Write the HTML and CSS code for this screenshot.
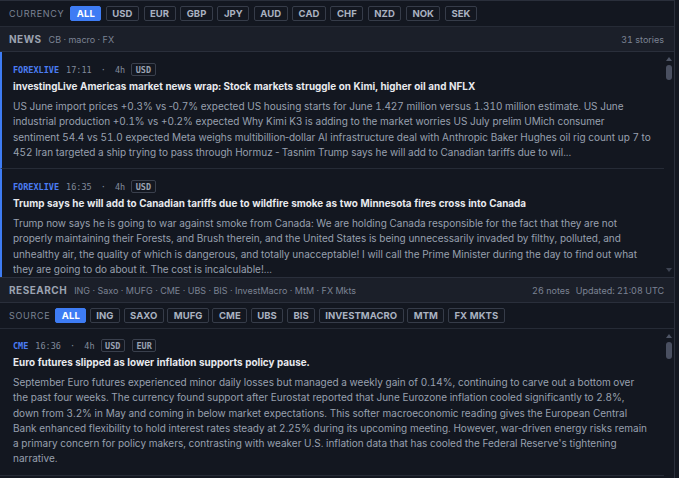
FILE: index.html
```html
<!DOCTYPE html>
<html lang="en">
<head>
<meta charset="utf-8">
<title>Macro Feed</title>
<link rel="stylesheet" href="styles.css">
</head>
<body>
<div class="app">
  <div class="filterbar">
    <span class="flabel">CURRENCY</span>
    <span class="chip active">ALL</span>
    <span class="chip">USD</span>
    <span class="chip">EUR</span>
    <span class="chip">GBP</span>
    <span class="chip">JPY</span>
    <span class="chip">AUD</span>
    <span class="chip">CAD</span>
    <span class="chip">CHF</span>
    <span class="chip">NZD</span>
    <span class="chip">NOK</span>
    <span class="chip">SEK</span>
  </div>

  <div class="sechead">
    <div class="sectitle"><span class="secname">NEWS</span><span class="secsub">CB · macro · FX</span></div>
    <span class="secinfo">31 stories</span>
  </div>

  <div class="listwrap news-wrap">
    <div class="list">
      <article class="item unread">
        <div class="meta"><span class="src">FOREXLIVE</span><span class="time">17:11 · 4h</span><span class="tag">USD</span></div>
        <h3 class="title">investingLive Americas market news wrap: Stock markets struggle on Kimi, higher oil and NFLX</h3>
        <p class="body clamp4">US June import prices +0.3% vs ‐0.7% expected US housing starts for June 1.427 million versus 1.310 million estimate. US June industrial production +0.1% vs +0.2% expected Why Kimi K3 is adding to the market worries US July prelim UMich consumer sentiment 54.4 vs 51.0 expected Meta weighs multibillion‐dollar AI infrastructure deal with Anthropic Baker Hughes oil rig count up 7 to 452 Iran targeted a ship trying to pass through Hormuz ‐ Tasnim Trump says he will add to Canadian tariffs due to wil...</p>
      </article>
      <article class="item unread">
        <div class="meta"><span class="src">FOREXLIVE</span><span class="time">16:35 · 4h</span><span class="tag">USD</span></div>
        <h3 class="title">Trump says he will add to Canadian tariffs due to wildfire smoke as two Minnesota fires cross into Canada</h3>
        <p class="body clamp4">Trump now says he is going to war against smoke from Canada: We are holding Canada responsible for the fact that they are not properly maintaining their Forests, and Brush therein, and the United States is being unnecessarily invaded by filthy, polluted, and unhealthy air, the quality of which is dangerous, and totally unacceptable! I will call the Prime Minister during the day to find out what they are going to do about it. The cost is incalculable!...</p>
      </article>
      <article class="item">
        <div class="meta"><span class="src">FOREXLIVE</span><span class="time">16:02 · 5h</span><span class="tag">USD</span></div>
        <h3 class="title">Baker Hughes oil rig count up 7 to 452</h3>
        <p class="body clamp4">Baker Hughes weekly rig count data shows oil rigs rising by seven to 452 while gas rigs were little changed.</p>
      </article>
    </div>
    <div class="scrollbar">
      <span class="arrow up"></span>
      <span class="thumb news-thumb"></span>
      <span class="spacer"></span>
      <span class="arrow down"></span>
    </div>
  </div>

  <div class="sechead">
    <div class="sectitle"><span class="secname">RESEARCH</span><span class="secsub">ING · Saxo · MUFG · CME · UBS · BIS · InvestMacro · MtM · FX Mkts</span></div>
    <span class="secinfo">26 notes<span class="updated">Updated: 21:08 UTC</span></span>
  </div>

  <div class="filterbar source">
    <span class="flabel">SOURCE</span>
    <span class="chip active">ALL</span>
    <span class="chip">ING</span>
    <span class="chip">SAXO</span>
    <span class="chip">MUFG</span>
    <span class="chip">CME</span>
    <span class="chip">UBS</span>
    <span class="chip">BIS</span>
    <span class="chip">INVESTMACRO</span>
    <span class="chip">MTM</span>
    <span class="chip">FX MKTS</span>
  </div>

  <div class="listwrap research-wrap">
    <div class="list">
      <article class="item">
        <div class="meta"><span class="src">CME</span><span class="time">16:36 · 4h</span><span class="tag">USD</span><span class="tag">EUR</span></div>
        <h3 class="title">Euro futures slipped as lower inflation supports policy pause.</h3>
        <p class="body">September Euro futures experienced minor daily losses but managed a weekly gain of 0.14%, continuing to carve out a bottom over the past four weeks. The currency found support after Eurostat reported that June Eurozone inflation cooled significantly to 2.8%, down from 3.2% in May and coming in below market expectations. This softer macroeconomic reading gives the European Central Bank enhanced flexibility to hold interest rates steady at 2.25% during its upcoming meeting. However, war‐driven energy risks remain a primary concern for policy makers, contrasting with weaker U.S. inflation data that has cooled the Federal Reserve's tightening narrative.</p>
      </article>
    </div>
    <div class="scrollbar">
      <span class="arrow up"></span>
      <span class="thumb research-thumb"></span>
    </div>
  </div>
</div>
</body>
</html>
```

FILE: styles.css
```css
* { box-sizing: border-box; }

html, body {
  margin: 0;
  padding: 0;
  background: #131720;
}

body {
  font-family: Inter, "Noto Sans", "Liberation Sans", sans-serif;
  font-variant-numeric: tabular-nums;
  color: #9aa2b2;
  width: 679px;
  height: 478px;
  overflow: hidden;
}

.app {
  width: 675px;
  height: 478px;
  display: flex;
  flex-direction: column;
  border-top: 1px solid #2a2f3b;
  border-right: 1px solid #2a2f3b;
  background: #131720;
}

.filterbar {
  flex: none;
  height: 26px;
  display: flex;
  align-items: center;
  gap: 4.5px;
  padding: 0 9px;
  border-bottom: 1px solid #262b36;
}

.filterbar.source {
  gap: 3.5px;
}

.flabel {
  font-size: 9px;
  letter-spacing: 0.7px;
  color: #7b8394;
  margin-right: 1.5px;
}

.chip {
  display: inline-flex;
  align-items: center;
  height: 15px;
  padding: 0 5.5px;
  border: 1px solid #363c49;
  border-radius: 2px;
  font-size: 9.5px;
  font-weight: 700;
  letter-spacing: 0.05px;
  color: #aab2c0;
}

.chip.active {
  background: #3e7cf4;
  border-color: #3e7cf4;
  color: #ffffff;
}

.sechead {
  flex: none;
  height: 25px;
  display: flex;
  align-items: center;
  justify-content: space-between;
  padding: 0 10px 0 9px;
  background: #1b1f29;
  border-bottom: 1px solid #2a2f3b;
}

.sectitle {
  display: flex;
  align-items: baseline;
  gap: 7px;
}

.secname {
  font-size: 10px;
  font-weight: 700;
  letter-spacing: 0.5px;
  color: #9ca3b1;
}

.secsub {
  font-size: 9px;
  color: #7b8394;
}

.secinfo {
  font-size: 9px;
  color: #7b8394;
}

.updated {
  margin-left: 6px;
}

.listwrap {
  display: flex;
  min-height: 0;
}

.news-wrap {
  flex: none;
  height: 226px;
  border-bottom: 1px solid #2a2f3b;
}

.research-wrap {
  flex: 1;
}

.list {
  flex: 1;
  min-width: 0;
  overflow: hidden;
}

.scrollbar {
  flex: none;
  width: 10px;
  display: flex;
  flex-direction: column;
  align-items: center;
  padding: 5px 0 5px;
}

.arrow {
  width: 0;
  height: 0;
  border-left: 3px solid transparent;
  border-right: 3px solid transparent;
}

.arrow.up {
  border-bottom: 4px solid #4f5666;
}

.arrow.down {
  border-top: 4px solid #3e4452;
}

.thumb {
  width: 6px;
  border-radius: 3px;
  background: #4a5061;
  margin-top: 4px;
}

.news-thumb { height: 15px; }
.research-thumb { height: 17px; }

.spacer { flex: 1; }

.item {
  padding: 11px 13px 8px 13px;
  border-bottom: 1px solid #262b36;
}

.research-wrap .item {
  padding-top: 10px;
}

.item.unread {
  border-left: 2px solid #3e7cf4;
  padding-left: 11px;
}

.meta {
  display: flex;
  align-items: center;
  font-family: "DejaVu Sans Mono", "Liberation Mono", monospace;
  font-size: 8.5px;
  height: 13px;
}

.src {
  color: #4b7df3;
  font-weight: 700;
  margin-right: 7px;
}

.time {
  color: #818a9b;
  word-spacing: 4px;
  margin-right: 6px;
}

.tag {
  display: inline-flex;
  align-items: center;
  height: 13px;
  padding: 0 3.5px;
  border: 1px solid #3a404d;
  border-radius: 2px;
  color: #9aa2b2;
  font-weight: 700;
  margin-right: 7px;
}

.title {
  margin: 3px 0 6px;
  font-size: 9.9px;
  font-weight: 700;
  line-height: 14px;
  color: #e8eaee;
}

.body {
  margin: 0;
  font-size: 10px;
  line-height: 15.3px;
  color: #98a0af;
}

.clamp4 {
  display: -webkit-box;
  -webkit-line-clamp: 4;
  -webkit-box-orient: vertical;
  overflow: hidden;
}
```
